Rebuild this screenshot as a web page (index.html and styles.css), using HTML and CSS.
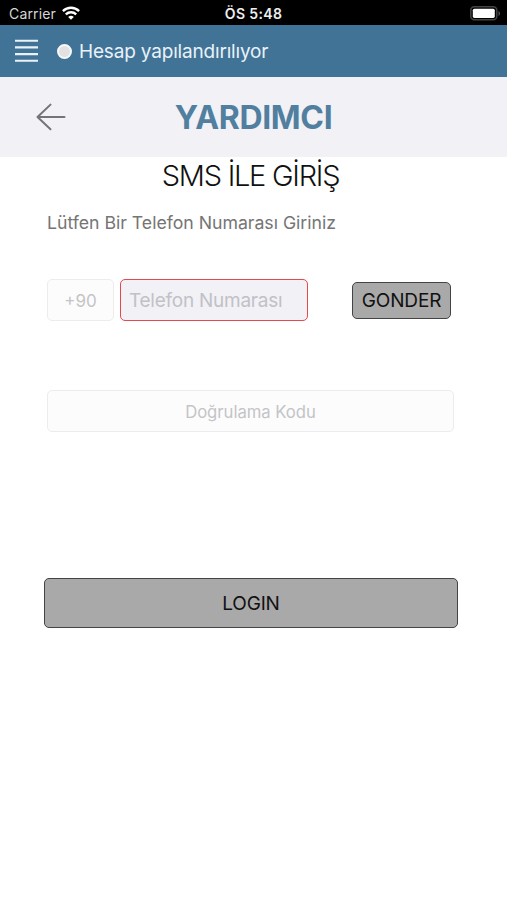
FILE: index.html
```html
<!DOCTYPE html>
<html lang="tr">
<head>
<meta charset="utf-8">
<meta name="viewport" content="width=device-width, initial-scale=1">
<title>Yardımcı</title>
<link rel="stylesheet" href="styles.css">
</head>
<body>
<header class="status">
  <div class="status-left"><span class="carrier">Carrier</span>
    <svg class="wifi" width="18" height="14" viewBox="0 0 18 14" fill="none" stroke="#fff" stroke-width="2.4"><path d="M.9 5.1C5.5.7 12.5.7 17.1 5.1"/><path d="M3.8 8.4c3-2.8 7.4-2.8 10.4 0"/><path d="M9 13.7 6.2 10.9c1.7-1.5 3.9-1.5 5.6 0Z" fill="#fff" stroke="none"/></svg>
  </div>
  <span class="clock">ÖS 5:48</span>
  <svg class="battery" width="31" height="15" viewBox="0 0 31 15"><rect x=".8" y=".8" width="26" height="13" rx="3.5" fill="#000" stroke="#444" stroke-width="1.5"/><rect x="2.8" y="2.7" width="22" height="9.2" rx="1.6" fill="#fff"/><path d="M28.5 5v5c2-.8 2-4.2 0-5Z" fill="#555"/></svg>
</header>
<nav class="bar">
  <svg class="menu" width="23" height="24" viewBox="0 0 23 24" stroke="#e9f2f8" stroke-width="2.1"><path d="M0 1.8h23M0 8.4h23M0 15.1h23M0 21.8h23"/></svg>
  <span class="dot"></span>
  <span class="bar-text">Hesap yapılandırılıyor</span>
</nav>
<div class="title-row">
  <svg class="back" width="30" height="28" viewBox="0 0 30 28" fill="none" stroke="#747378" stroke-width="2" stroke-linecap="round" stroke-linejoin="round"><path d="M28.5 14H1.5M14.5 1.6 1.5 14l13 12.2"/></svg>
  <h1 class="title">YARDIMCI</h1>
</div>
<main class="content">
  <h2 class="heading"><span>SMS İLE GİRİŞ</span></h2>
  <p class="hint"><span>Lütfen Bir Telefon Numarası Giriniz</span></p>
  <div class="phone">
    <div class="field code"><span>+90</span></div>
    <div class="field number"><span>Telefon Numarası</span></div>
    <button class="btn send"><span>GONDER</span></button>
  </div>
  <div class="field verify"><span>Doğrulama Kodu</span></div>
  <button class="btn login"><span>LOGIN</span></button>
</main>
</body>
</html>
```
FILE: styles.css
```css
* { box-sizing: border-box; }
body { margin: 0; height: 900px; background: #fff; font-family: Inter, "Liberation Sans", sans-serif; overflow: hidden; }
h1, h2, p { margin: 0; font-weight: 400; }
svg { display: block; flex: none; }
span, h1 { white-space: nowrap; }

.status { display: grid; grid-template-columns: 1fr auto 1fr; align-items: center; height: 25px; padding: 1px 6px 0 9px; background: #000; color: #fff; }
.status-left { display: flex; align-items: center; gap: 6px; }
.carrier { font-size: 14px; letter-spacing: .15px; color: #d6d6d6; }
.clock { margin-left: -3px; font-size: 14px; font-weight: 600; letter-spacing: .35px; color: #eee; }
.battery { justify-self: end; }

.bar { display: flex; align-items: center; height: 52px; padding-left: 15px; background: #417397; }
.dot { width: 15px; height: 15px; margin: 0 7px 0 19px; border: 2px solid #f6f8fa; border-radius: 50%; background: #e2e2e2; }
.bar-text { font-size: 19px; letter-spacing: -.18px; color: #e9f2f8; }

.title-row { display: grid; grid-template-columns: 1fr auto 1fr; align-items: center; height: 80px; padding: 0 36px; background: #f2f1f6; }
.title { font-size: 32px; font-weight: 700; letter-spacing: -.35px; color: #517f9f; }

.content { display: flex; flex-direction: column; padding: 0 53px 0 47px; }
.heading { height: 37px; line-height: 37px; text-align: center; font-size: 29px; font-weight: 300; letter-spacing: -1.25px; color: #111; }
.hint { height: 56px; line-height: 57px; font-size: 17.7px; letter-spacing: -.02px; color: #757575; }
.phone { display: flex; align-items: center; margin-top: 29px; }
.field { display: flex; align-items: center; justify-content: center; height: 42px; padding-top: 1px; border: 1px solid #ececee; border-radius: 5px; background: #fcfcfd; color: #c4c4c6; }
.code { width: 67px; margin-right: 6px; font-size: 17px; }
.number { width: 188px; justify-content: flex-start; padding-left: 8px; border: 1.5px solid #e5484d; background: #f1f1f6; font-size: 19px; letter-spacing: -.25px; color: #c1c1c6; }
.btn { display: flex; align-items: center; justify-content: center; padding: 0; border: 1px solid #444; border-radius: 5px; background: #a9a9a9; color: #111; font-family: inherit; font-size: 19px; letter-spacing: -.15px; }
.send { width: 99px; height: 37px; margin-left: 44px; }
.verify { width: 407px; margin-top: 69px; font-size: 16.7px; letter-spacing: -.03px; }
.login { width: 414px; height: 50px; margin: 146px 0 0 -3px; }
```
